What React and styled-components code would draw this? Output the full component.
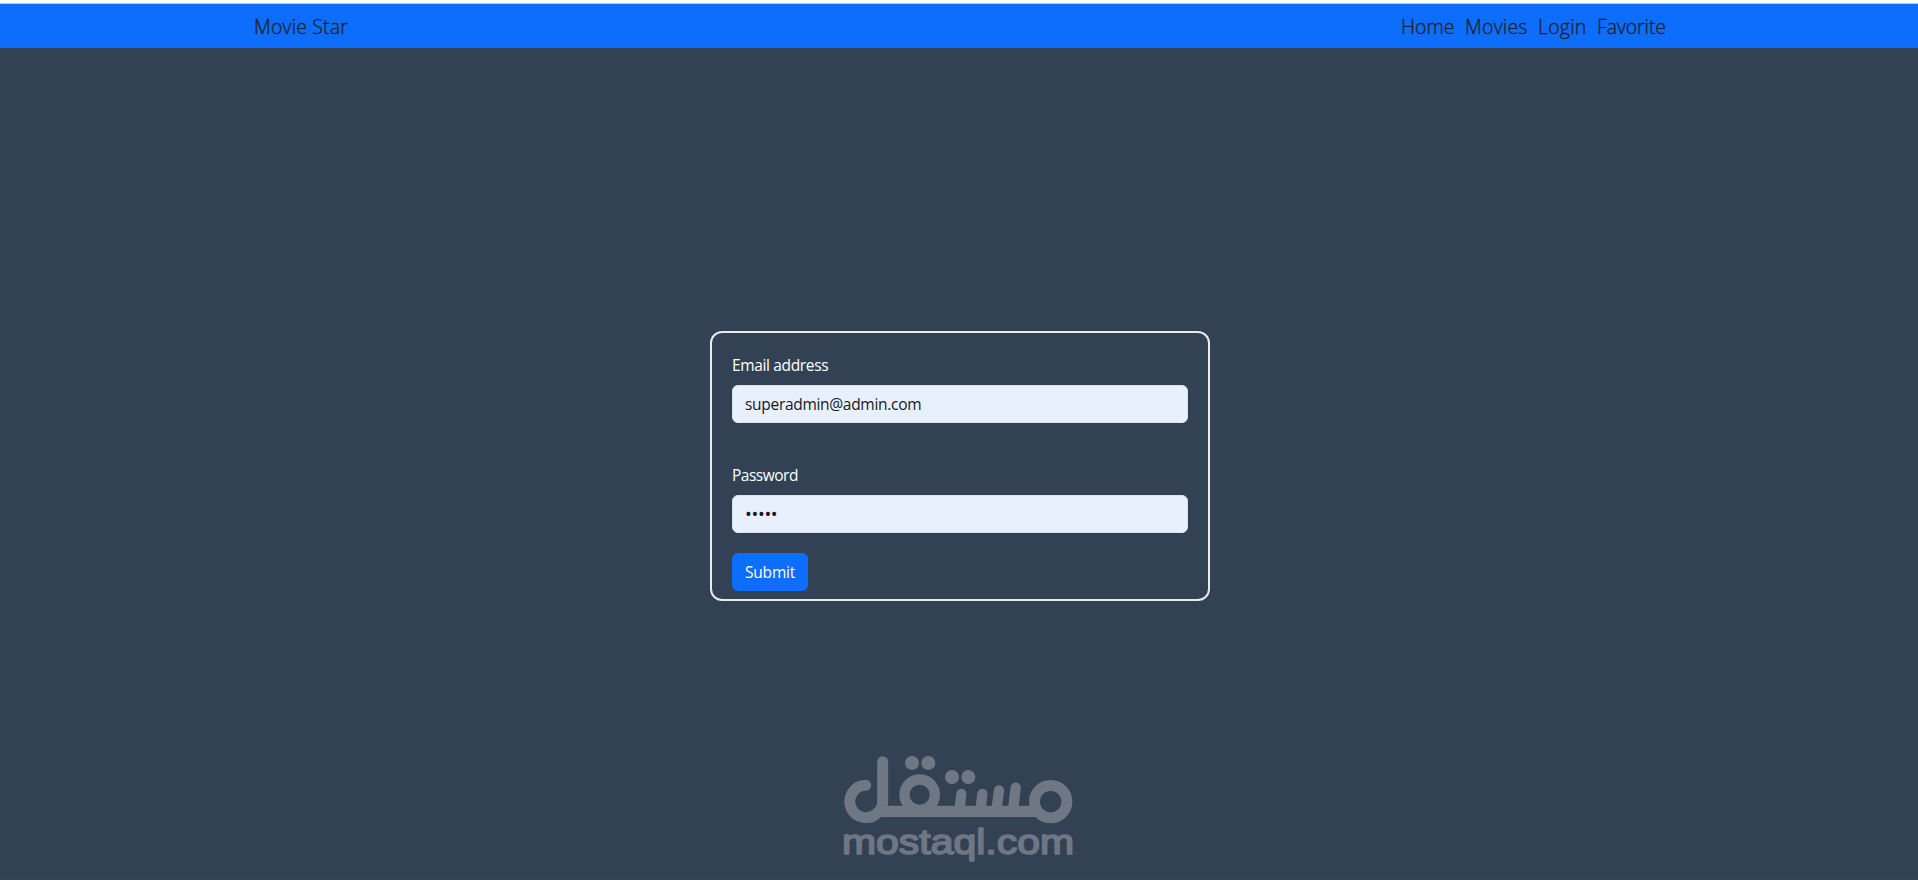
import React, { useState } from 'react';
import styled, { createGlobalStyle } from 'styled-components';

const GlobalStyle = createGlobalStyle`
    * {
        box-sizing: border-box;
    }
    body {
        margin: 0;
        background-color: #334155;
        font-family: 'Segoe UI', 'Open Sans', sans-serif;
        font-size: 15.5px;
        line-height: 24px;
    }
`;

const StyledPage = styled.div`
    display: flex;
    flex-direction: column;
    height: 880px;
    border-top: 3px solid #ffffff;
    border-bottom: 1px solid #37415b;
    overflow: hidden;
`;

const StyledNavbar = styled.nav`
    display: flex;
    flex: none;
    justify-content: space-between;
    align-items: center;
    height: 45px;
    padding: 2px 251px 0 254px;
    border-top: 1px solid #c3c7cd;
    background-color: #0d6efd;
    color: #1c2126;
    font-size: 19.5px;
    font-weight: 300;
    line-height: 30px;
    -webkit-text-stroke: 0.3px #1c2126;

    .nav-links {
        display: flex;
        gap: 10px;
    }
`;

const StyledNavItem = styled.span`
    width: ${props => props.$width}px;
    letter-spacing: ${props => props.$spacing || 0}px;
    white-space: nowrap;
    cursor: pointer;
`;

const StyledMain = styled.main`
    display: flex;
    flex: 1;
    flex-direction: column;
    align-items: center;
    padding: 283px 0 0 2px;
`;

const StyledForm = styled.form`
    display: flex;
    flex: none;
    flex-direction: column;
    width: 500px;
    height: 270px;
    padding: 20px;
    border: 2px solid #e8eaeb;
    border-radius: 12px;
`;

const StyledLabel = styled.label`
    flex: none;
    margin-bottom: 8px;
    color: #ffffff;
    letter-spacing: ${props => props.$spacing}px;
`;

const StyledInput = styled.input`
    flex: none;
    height: 38px;
    margin-bottom: ${props => props.$gap}px;
    padding: 6px 12px;
    border: 1px solid #dee2e6;
    border-radius: 6px;
    outline: none;
    background-color: #e8f0fe;
    color: #16191d;
    font-family: inherit;
    font-size: ${props => props.$size}px;
    line-height: 24px;
    letter-spacing: ${props => props.$spacing}px;
`;

const StyledButton = styled.button`
    flex: none;
    width: 76px;
    height: 38px;
    padding: 0 0 0 13px;
    border: 0;
    border-radius: 6px;
    background-color: #0d6efd;
    color: #ffffff;
    font-family: inherit;
    font-size: 15.5px;
    line-height: 24px;
    letter-spacing: -0.2px;
    text-align: left;
    cursor: pointer;
`;

const StyledLogo = styled.svg`
    flex: none;
    width: 260px;
    height: 140px;
    margin-top: 139px;
    fill: #6f7684;

    .line {
        fill: none;
        stroke: #6f7684;
        stroke-linecap: round;
    }

    text {
        font-family: 'Liberation Sans', Arial, sans-serif;
        font-size: 106px;
        stroke: #6f7684;
        stroke-width: 5px;
        stroke-linejoin: round;
    }
`;

const links = [
    { name: 'Home', width: 54, spacing: 0 },
    { name: 'Movies', width: 63, spacing: 0.2 },
    { name: 'Login', width: 49, spacing: 0.2 },
    { name: 'Favorite', width: 70, spacing: -0.1 },
];

const Logo = () => (
    <StyledLogo viewBox="0 0 780 420">
        {/* lam and the base line */}
        <path className="line" strokeWidth="33" d="M107 136A48.5 48.5 0 1 0 143 218Q158 206 158 184V65" />
        <path className="line" strokeWidth="34" d="M150 214H620" />
        {/* qaf and meem */}
        <circle className="line" strokeWidth="31" cx="269" cy="164" r="45.5" />
        <circle className="line" strokeWidth="33" cx="662" cy="185" r="48.5" />
        <path className="line" strokeWidth="31" d="M394 162L389 205M457 162L452 205M507 151L500 205M557 143L550 205" />
        <circle cx="246" cy="69" r="21" />
        <circle cx="295" cy="69" r="21" />
        <circle cx="366" cy="111" r="21" />
        <circle cx="415" cy="111" r="21" />
        <text x="36" y="341" textLength="696" lengthAdjust="spacingAndGlyphs">mostaql.com</text>
    </StyledLogo>
);

const App = () => {
    const [email, setEmail] = useState('superadmin@admin.com');
    const [password, setPassword] = useState('admin');

    return (
        <StyledPage>
            <GlobalStyle />
            <StyledNavbar>
                <StyledNavItem $width={96} $spacing={0.15}>Movie Star</StyledNavItem>
                <div className="nav-links">
                    {links.map((l) => (
                        <StyledNavItem key={l.name} $width={l.width} $spacing={l.spacing}>{l.name}</StyledNavItem>
                    ))}
                </div>
            </StyledNavbar>
            <StyledMain>
                <StyledForm onSubmit={(e) => e.preventDefault()}>
                    <StyledLabel htmlFor="email" $spacing={-0.35}>Email address</StyledLabel>
                    <StyledInput id="email" type="email" $gap={40} $size={15.5} $spacing={-0.3} value={email} onChange={(e) => setEmail(e.target.value)} />
                    <StyledLabel htmlFor="password" $spacing={-0.5}>Password</StyledLabel>
                    <StyledInput id="password" type="password" $gap={20} $size={18} $spacing={-0.3} value={password} onChange={(e) => setPassword(e.target.value)} />
                    <StyledButton type="submit">Submit</StyledButton>
                </StyledForm>
                <Logo />
            </StyledMain>
        </StyledPage>
    );
};

export default App;
